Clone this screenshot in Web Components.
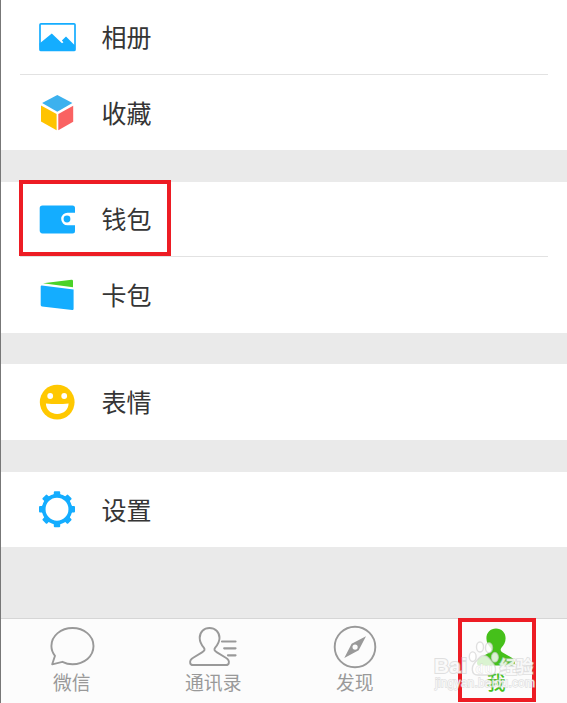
<!DOCTYPE html>
<html lang="zh-CN">
<head>
<meta charset="utf-8">
<title>我</title>
<style>
  html, body { margin: 0; height: 100%; }
  body { overflow: hidden; background: #eaeaea; font-family: "Liberation Sans", "Noto Sans CJK SC", sans-serif; }
</style>
</head>
<body>
<me-page>
  <menu-group>
    <menu-item icon="album" label="相册"></menu-item>
    <menu-item icon="cube" label="收藏"></menu-item>
  </menu-group>
  <menu-group style="--h: 151px; --gap: 31px">
    <menu-item icon="wallet" label="钱包" marked></menu-item>
    <menu-item icon="cards" label="卡包"></menu-item>
  </menu-group>
  <menu-group style="--h: 76px">
    <menu-item icon="smile" label="表情"></menu-item>
  </menu-group>
  <menu-group style="--h: 75px">
    <menu-item icon="gear" label="设置"></menu-item>
  </menu-group>
  <tab-bar slot="tabs">
    <tab-item icon="chat" label="微信"></tab-item>
    <tab-item icon="contacts" label="通讯录"></tab-item>
    <tab-item icon="compass" label="发现"></tab-item>
    <tab-item icon="me" label="我" active></tab-item>
  </tab-bar>
  <water-mark slot="overlay"></water-mark>
</me-page>

<script>
// 40x40 menu icons
const MENU_ICONS = {
  album: `<rect x="3" y="6.8" width="35" height="26.6" rx="1" fill="#fff" stroke="#14adff" stroke-width="1.7"/>
    <path fill="#14adff" d="M2.5 26.5 14.8 16.4 25 26.3 26.4 25.2 24.9 23.4 29 19.6 38 28.6V33.5H3z"/>`,
  cube: `<path fill="#3cb1ee" d="M20.3 1.9 35.4 10 20.3 18.7 5.1 10z"/>
    <path fill="#ffc300" d="M4 12.4 19.6 21V37.2L4 28.4z"/>
    <path fill="#fa6262" d="M36.2 12.8V28.7L21.3 37.3V21z"/>`,
  wallet: `<path fill="#14adff" d="M5.5 6.4H35.5Q38 6.4 38 8.9V13.7H30.5A6.3 6.3 0 0 0 30.5 26.3H38V31.9Q38 34.4 35.5 34.4H5.5Q2.7 34.4 2.7 31.6V9.2Q2.7 6.4 5.5 6.4z"/>
    <circle cx="30" cy="20" r="3.4" fill="#14adff"/>`,
  cards: `<path fill="#4bd228" d="M6 8.2 34.5 4.8Q36 4.7 36 6V12.2z"/>
    <path fill="#14adff" d="M4.8 10.4 36.6 14.6V33.8Q36.6 35.2 35.2 35L5 31.4Q3.7 31.2 3.7 30V11.4Q3.7 10.3 4.8 10.4z"/>`,
  smile: `<circle cx="20.2" cy="20.1" r="17.4" fill="#ffc800"/>
    <circle cx="13.2" cy="14" r="2.9" fill="#fff"/><circle cx="27.2" cy="14" r="2.9" fill="#fff"/>
    <path fill="#fff" d="M8.9 21.5Q20.2 22.7 31.6 21.5C31.3 27.5 27 31.9 20.2 31.9S9.2 27.5 8.9 21.5z"/>`,
  gear: `<g transform="translate(0 -.8)"><circle cx="20" cy="20" r="13.3" fill="none" stroke="#14adff" stroke-width="3.7"/>
    <g fill="#14adff">${[0, 45, 90, 135, 180, 225, 270, 315].map(a =>
      `<path transform="rotate(${a} 20 20)" d="M15 6.8 16.8 5V3Q16.8 2 17.8 2H22.2Q23.2 2 23.2 3V5L25 6.8z"/>`).join('')}</g></g>`
};

// 56x44 tab icons
const TAB_ICONS = {
  chat: `<path d="M11 30.8C8.6 27.9 7.4 24.5 7.4 21 7.4 10.7 17 3 28.5 3S49.5 10.7 49.5 21 40.3 39.2 28.5 39.2C24.8 39.2 21.6 38.4 18.4 36.8L8.2 39.3z"/>`,
  contacts: `<path d="M24.5 3C18.8 3 14.7 7 14.7 13C14.7 17.5 17 20.5 18.8 22.6C20.3 24.6 19.6 25.8 17 27.4L8.2 32.7C5.5 34.3 4.8 36 5.2 38Q5.5 40 8 40H41Q43.5 40 43.8 38C44.2 36 43.5 34.3 40.8 32.7L32 27.4C29.4 25.8 28.7 24.6 30.2 22.6C32 20.5 34.5 17.5 34.5 13C34.5 7 30.2 3 24.5 3z"/>
    <path stroke-width="2.2" stroke-linecap="round" d="M37 16.5H50.5M39.2 23.3H50.5M43 30.3H50.5"/>`,
  compass: `<circle cx="28" cy="22" r="20.3"/>
    <path fill="#999" stroke="none" fill-rule="evenodd" d="M39 11.2 31.7 25.2 17.3 33 24.6 18.8zM28.1 19.5A2.6 2.6 0 1 0 28.1 24.7A2.6 2.6 0 1 0 28.1 19.5z"/>`,
  me: `<path fill="#45c01a" stroke="none" d="M28 3.4C22.5 3.4 18.4 7.5 18.4 13.2C18.4 17.5 20.5 20.5 22.4 22.5C24.2 24.8 23.4 26.3 20.5 28L12.2 32.8C9.6 34.4 9 36.4 9 38.5Q9 40.5 11.5 40.5H44.5Q47 40.5 47 38.5C47 36.4 46.4 34.4 43.8 32.8L35.5 28C32.6 26.3 31.8 24.8 33.6 22.5C35.5 20.5 37.6 17.5 37.6 13.2C37.6 7.5 33.5 3.4 28 3.4z"/>`
};

class MePage extends HTMLElement {
  constructor() {
    super();
    this.attachShadow({ mode: 'open' }).innerHTML = `
      <style>
        :host { display: flex; flex-direction: column; position: relative; box-sizing: border-box; height: 703px; background: #eaeaea; }
        main { flex: 1; }
        .edge { position: absolute; left: 0; top: 0; width: 1px; height: 100%; background: #777; }
      </style>
      <main><slot></slot></main>
      <slot name="tabs"></slot>
      <div class="edge"></div>
      <slot name="overlay"></slot>
    `;
  }
}

class MenuGroup extends HTMLElement {
  constructor() {
    super();
    this.attachShadow({ mode: 'open' }).innerHTML = `
      <style>
        :host { display: flex; flex-direction: column; box-sizing: border-box; height: var(--h, 150px); margin-bottom: var(--gap, 32px); background: #fff; }
        ::slotted(menu-item) { flex: 0 0 75px; }
        ::slotted(menu-item:last-child) { flex: 1 0 75px; }
      </style>
      <slot></slot>
    `;
  }
}

class MenuItem extends HTMLElement {
  connectedCallback() {
    this.attachShadow({ mode: 'open' }).innerHTML = `
      <style>
        :host { display: flex; position: relative; padding: 0 19px 0 20px; }
        .row { display: flex; flex: 1; align-items: center; gap: 24.5px; padding-left: 17px; border-bottom: 1px solid #e2e2e2; }
        :host(:last-child) .row { border-bottom: 0; }
        svg { width: 40px; height: 40px; flex: none; }
        span { padding-top: 2px; font-size: 25px; line-height: 36px; color: #353535; }
        .mark { position: absolute; left: 18.5px; top: -2px; width: 152px; height: 76px; box-sizing: border-box; border: 4px solid #ed1c24; z-index: 1; }
      </style>
      <div class="row">
        <svg viewBox="0 0 40 40">${MENU_ICONS[this.getAttribute('icon')]}</svg>
        <span>${this.getAttribute('label')}</span>
      </div>
      ${this.hasAttribute('marked') ? '<div class="mark"></div>' : ''}
    `;
  }
}

class TabBar extends HTMLElement {
  constructor() {
    super();
    this.attachShadow({ mode: 'open' }).innerHTML = `
      <style>
        :host { display: flex; box-sizing: border-box; height: 85px; padding-left: 1px; border-top: 1px solid #d6d6d6; background: #fcfcfc; }
        ::slotted(tab-item) { flex: 1; }
      </style>
      <slot></slot>
    `;
  }
}

class TabItem extends HTMLElement {
  connectedCallback() {
    this.attachShadow({ mode: 'open' }).innerHTML = `
      <style>
        :host { display: flex; flex-direction: column; align-items: center; position: relative; padding-top: 6px; color: #999; }
        :host([active]) { color: #45c01a; }
        svg { width: 56px; height: 44px; fill: none; stroke: #999; stroke-width: 1.9; stroke-linejoin: round; }
        span { margin-top: 1px; font-size: 18.8px; line-height: 28px; }
        :host([active]) span { font-weight: 500; }
        .mark { position: absolute; left: 32.5px; top: -1px; width: 78px; height: 84px; box-sizing: border-box; border: 4px solid #ed1c24; }
      </style>
      <svg viewBox="0 0 56 44">${TAB_ICONS[this.getAttribute('icon')]}</svg>
      <span>${this.getAttribute('label')}</span>
      ${this.hasAttribute('active') ? '<div class="mark"></div>' : ''}
    `;
  }
}

// translucent site mark over the last tab
class WaterMark extends HTMLElement {
  constructor() {
    super();
    this.attachShadow({ mode: 'open' }).innerHTML = `
      <style>
        :host { display: block; position: absolute; left: 427px; top: 635px; width: 120px; height: 62px; pointer-events: none; }
        svg { display: block; }
        text { font-family: "Liberation Sans", "Noto Sans CJK SC", sans-serif; font-weight: bold; paint-order: stroke; }
        .url { font-weight: normal; }
      </style>
      <svg width="120" height="62" fill="#fff" fill-opacity=".8" stroke="#ccc" stroke-opacity=".6" stroke-width="1.4">
        <text x="7" y="38" font-size="21" textLength="33" stroke-width="2">Bai</text>
        <ellipse cx="45.7" cy="21.7" rx="3.4" ry="4.8"/>
        <ellipse cx="53" cy="12" rx="3.5" ry="5"/>
        <ellipse cx="62" cy="12.8" rx="3.5" ry="5"/>
        <ellipse cx="67.9" cy="22.3" rx="3.4" ry="4.8"/>
        <path d="M57 20.5C53 20.5 51.5 24 48.5 27C44 31.5 44 40 50.5 40H63.5C70 40 69.5 31.5 65.5 27.5C62.5 24 61 20.5 57 20.5z"/>
        <text x="48.5" y="37.5" font-size="13" textLength="17" stroke-width=".8">du</text>
        <text x="72.5" y="37.5" font-size="17.5" textLength="34" stroke-width="1.6">经验</text>
        <text class="url" x="8" y="52" font-size="12" textLength="100" stroke-width="1.3">jingyan.baidu.com</text>
      </svg>
    `;
  }
}

customElements.define('me-page', MePage);
customElements.define('menu-group', MenuGroup);
customElements.define('menu-item', MenuItem);
customElements.define('tab-bar', TabBar);
customElements.define('tab-item', TabItem);
customElements.define('water-mark', WaterMark);
</script>
</body>
</html>
